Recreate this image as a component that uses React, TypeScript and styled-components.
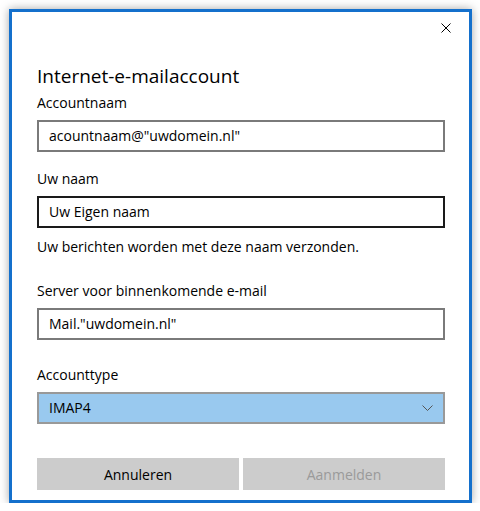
import React from "react";
import styled, { createGlobalStyle } from "styled-components";

const Global = createGlobalStyle`
  html, body { margin: 0; padding: 0; background: #ffffff; }
  body { font-family: "Open Sans", "Noto Sans", sans-serif; color: #000; }
  * { box-sizing: border-box; }
`;

const Dialog = styled.div`
  margin: 9px 0 0 9px;
  width: 463px;
  height: 494px;
  border: 3px solid #1470cc;
  background: #ffffff;
  box-shadow: 0 0 9px rgba(0, 0, 0, 0.35);
  display: flex;
  flex-direction: column;
  padding: 0 24px 0 25px;
`;

const CloseBar = styled.div`
  margin: 0 -24px 0 -25px;
  height: 32px;
  display: flex;
  justify-content: flex-end;
  align-items: center;
  padding-right: 18px;
`;

const CloseButton = styled.button`
  width: 10px;
  height: 10px;
  padding: 0;
  border: 0;
  background: transparent;
  display: flex;
  cursor: pointer;
`;

const Title = styled.h1`
  margin: 19px 0 4px 0;
  font-size: 19px;
  line-height: 26px;
  font-weight: 400;
`;

const Label = styled.div<{ $top?: number }>`
  margin-top: ${(p) => p.$top ?? 0}px;
  font-size: 14px;
  line-height: 20px;
  margin-bottom: 7px;
`;

const Help = styled.div`
  margin-top: 9px;
  font-size: 14px;
  line-height: 20px;
`;

const Input = styled.div<{ $focused?: boolean }>`
  height: 32px;
  border: 2px solid ${(p) => (p.$focused ? "#1a1a1a" : "#7a7a7a")};
  padding: 0 10px;
  font-size: 14px;
  line-height: 28px;
  white-space: nowrap;
`;

const Select = styled.div`
  height: 32px;
  border: 2px solid #999999;
  background: #99c9ef;
  padding: 0 10px;
  font-size: 14px;
  line-height: 28px;
  display: flex;
  justify-content: space-between;
  align-items: center;
`;

const Buttons = styled.div`
  margin-top: 34px;
  display: grid;
  grid-template-columns: 1fr 1fr;
  gap: 4px;
`;

const Button = styled.button<{ $disabled?: boolean }>`
  height: 32px;
  border: 0;
  background: #cccccc;
  font-family: inherit;
  font-size: 14px;
  color: ${(p) => (p.$disabled ? "#9a9a9a" : "#000000")};
  padding: 0;
`;

export default function App() {
  return (
    <>
      <Global />
      <Dialog>
        <CloseBar>
          <CloseButton aria-label="Sluiten">
            <svg width="10" height="10" viewBox="0 0 10 10">
              <path d="M0.5 0.5 L9.5 9.5 M9.5 0.5 L0.5 9.5" stroke="#000" strokeWidth="1" fill="none" />
            </svg>
          </CloseButton>
        </CloseBar>
        <Title>Internet-e-mailaccount</Title>
        <Label>Accountnaam</Label>
        <Input>acountnaam@"uwdomein.nl"</Input>
        <Label $top={17}>Uw naam</Label>
        <Input $focused>Uw Eigen naam</Input>
        <Help>Uw berichten worden met deze naam verzonden.</Help>
        <Label $top={24}>Server voor binnenkomende e-mail</Label>
        <Input>Mail."uwdomein.nl"</Input>
        <Label $top={25}>Accounttype</Label>
        <Select>
          <span>IMAP4</span>
          <svg width="11" height="6" viewBox="0 0 11 6">
            <path d="M0.5 0.5 L5.5 5.5 L10.5 0.5" stroke="#555" strokeWidth="1" fill="none" />
          </svg>
        </Select>
        <Buttons>
          <Button>Annuleren</Button>
          <Button $disabled>Aanmelden</Button>
        </Buttons>
      </Dialog>
    </>
  );
}
